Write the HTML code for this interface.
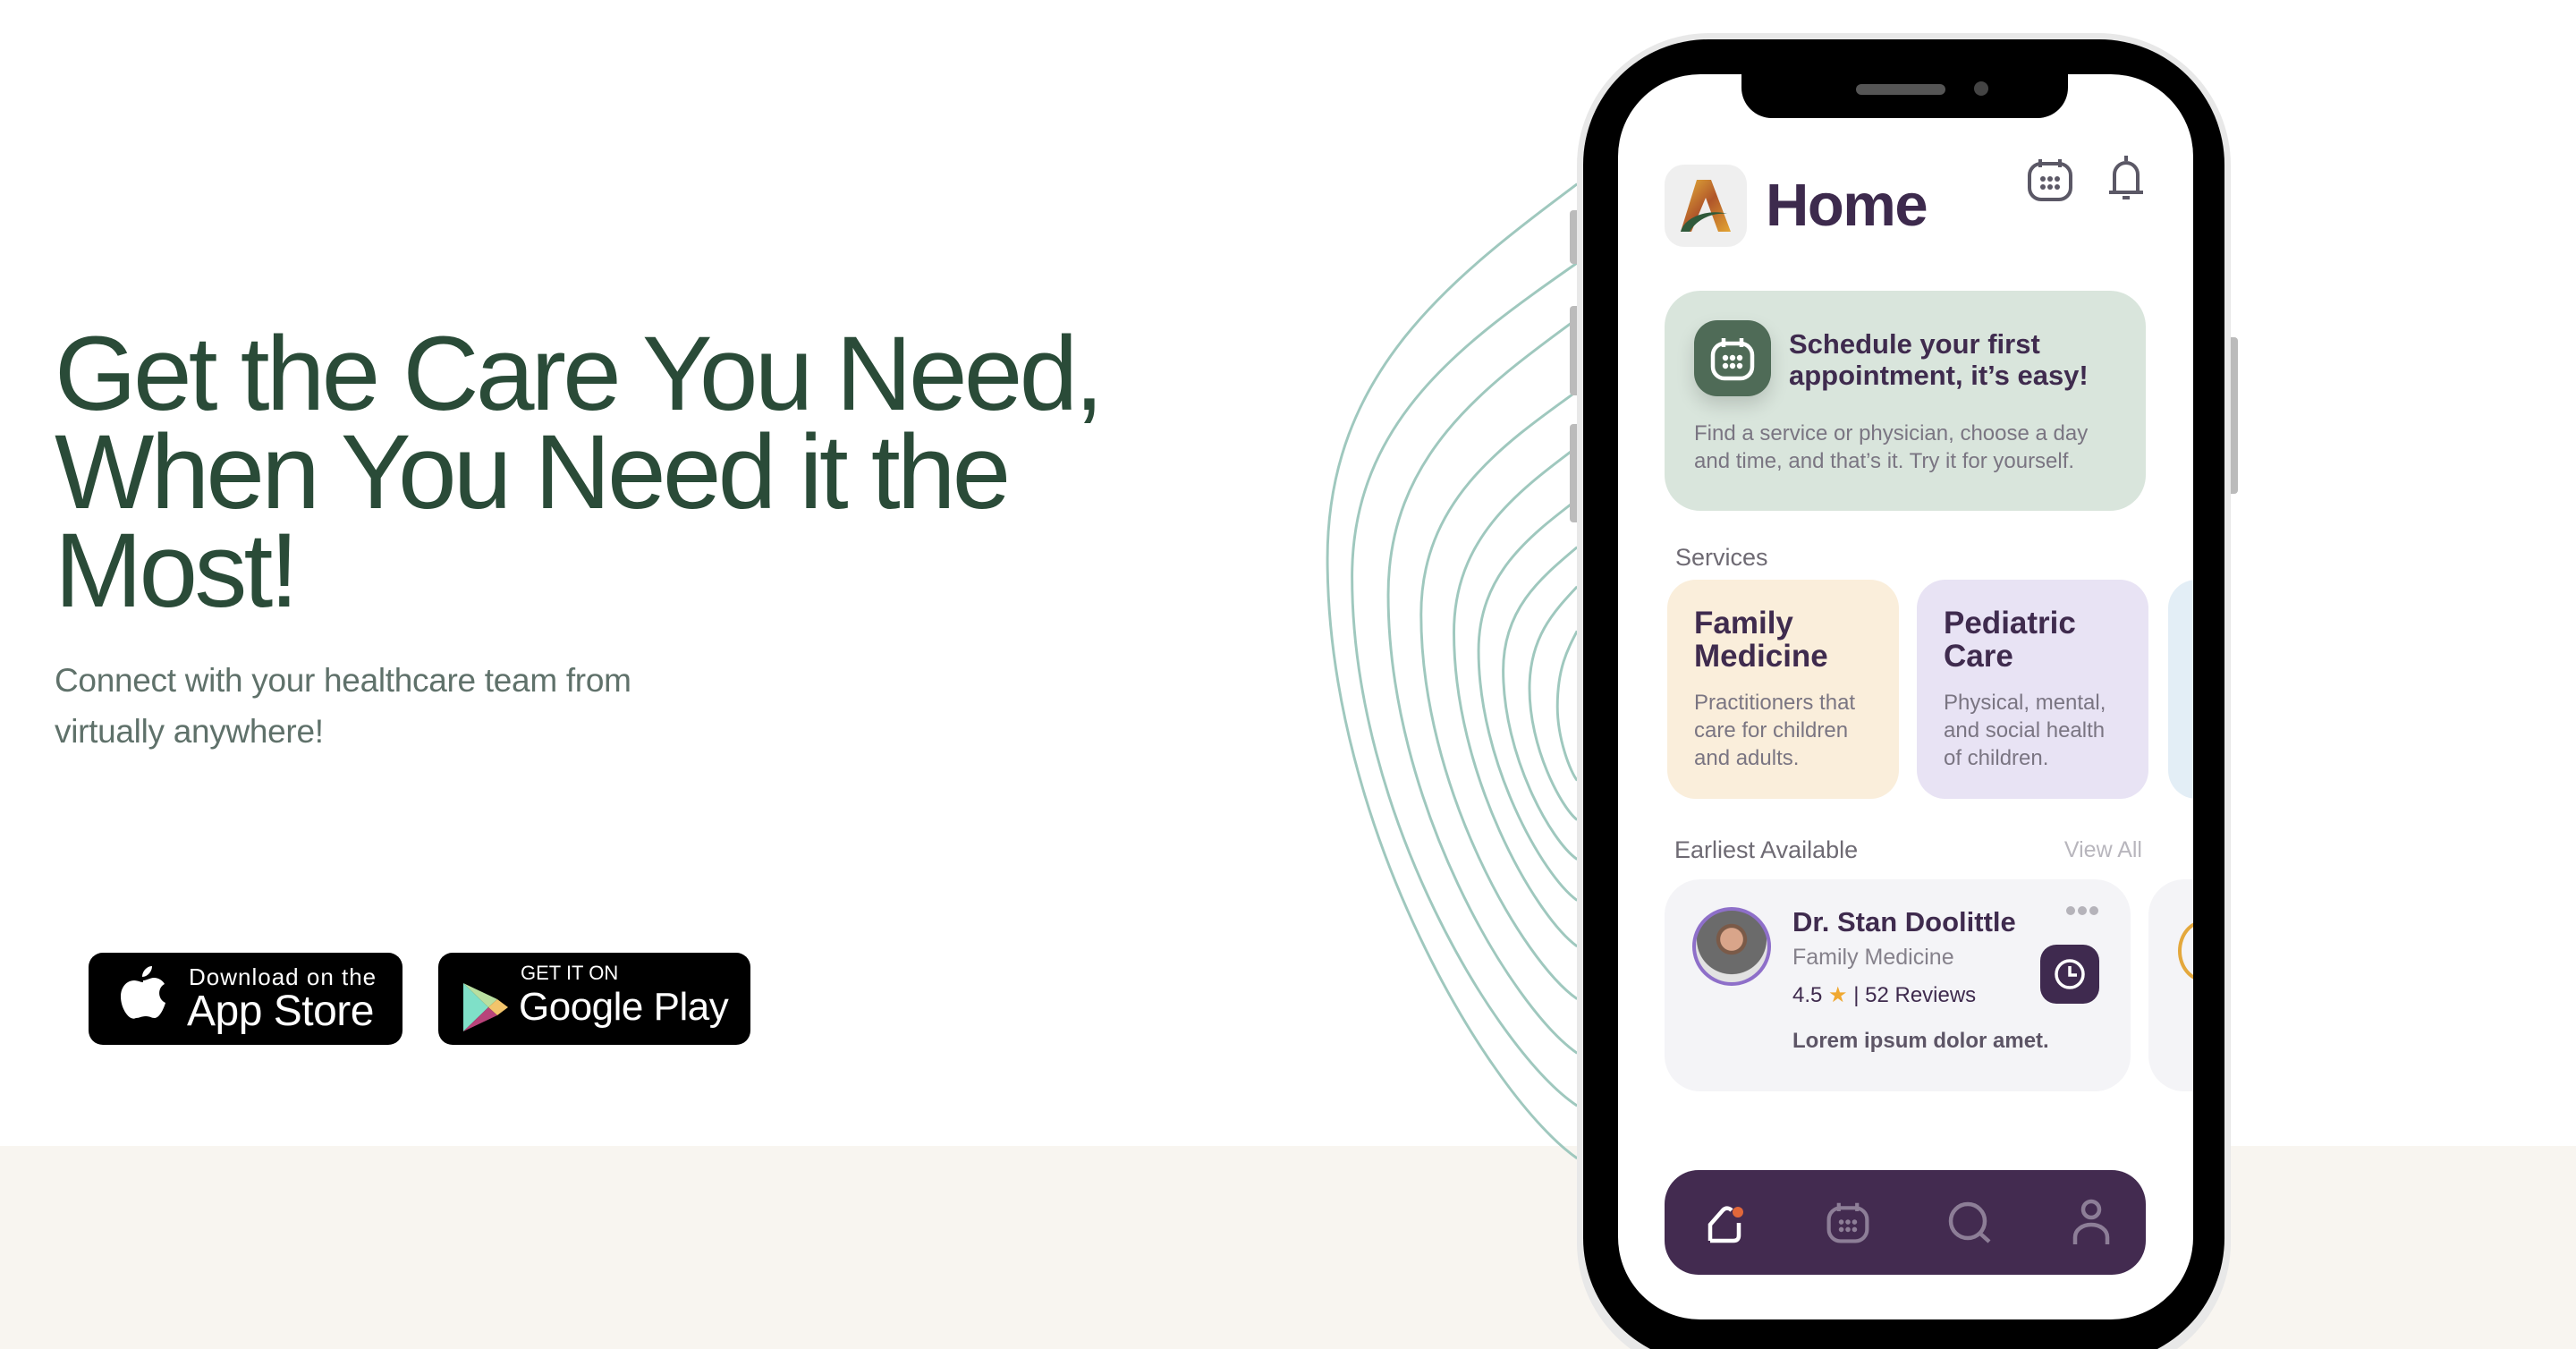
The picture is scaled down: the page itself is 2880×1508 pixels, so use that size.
<!DOCTYPE html>
<html><head><meta charset="utf-8"><style>
*{margin:0;padding:0;box-sizing:border-box}
html{width:2880px;height:1508px;overflow:hidden}
body{width:2880px;height:1508px;overflow:hidden;background:#fff;font-family:"Liberation Sans",Arial,sans-serif;position:relative}
.a{position:absolute;white-space:nowrap;line-height:1}
.scr .t{color:#3f2b4e;font-weight:bold}
.g{color:#7a7582}
</style></head><body>
<div class="a" style="left:0;top:1281px;width:2880px;height:227px;background:#f8f5f0"></div>

<svg class="a" style="left:0;top:0" width="2880" height="1508" viewBox="0 0 1568 821.03" fill="none" stroke="#9fc8be">
<g stroke-width="1.6">
<path d="M960,112 C884,169 808,226 808,340 C808,504 907,668 960,705"/>
<path d="M960,160 C891.5,208 823,255.5 823,351 C823,496 912,641 960,673"/>
<path d="M960,194 C902.5,236 845,278 845,362 C845,488 920,613 960,641"/>
<path d="M960,238 C912.5,272 865,306 865,374 C865,479 927,585 960,608"/>
<path d="M960,272 C922.5,300 885,328.5 885,385 C885,471 934,557 960,576"/>
<path d="M960,304 C930,327 900,350 900,396 C900,464 939,533 960,548"/>
<path d="M960,333 C937.5,352 915,370.5 915,408 C915,460 944,512 960,523"/>
<path d="M960,357 C945.5,372.5 931,388 931,419 C931,455 950,491 960,499"/>
<path d="M960,384 C954,395.5 948,407 948,430 C948,450 956,470 960,475"/>
</g>
</svg>

<div class="a" style="left:61px;top:363px;font-size:118px;line-height:110px;color:#2a4b38;letter-spacing:-3.8px;white-space:normal;width:1300px">Get the Care You Need,<br>When You Need it the<br>Most!</div>
<div class="a" style="left:61px;top:732px;font-size:37px;line-height:57px;color:#5f716a;letter-spacing:-0.3px;white-space:normal;width:800px">Connect with your healthcare team from<br>virtually anywhere!</div>

<div class="a" style="left:99px;top:1065px;width:351px;height:103px;background:#000;border-radius:16px"></div>
<svg class="a" style="left:130px;top:1076px" width="60" height="74" viewBox="0 0 60 74"><path fill="#fff" d="M40 4c0 6-5 12-11 12 0-6 5-12 11-12zM30 20c4 0 8-3 12-3 5 0 10 3 12 7-8 4-8 17 1 21-2 7-7 17-12 17-4 0-5-2-10-2s-7 2-11 2C15 66 5 52 5 38 5 27 12 20 20 20c4 0 7 2 10 2z"/></svg>
<div class="a" style="left:211px;top:1079px;font-size:26px;color:#fff;letter-spacing:1px">Download on the</div>
<div class="a" style="left:209px;top:1107px;font-size:48px;color:#fff;letter-spacing:-0.5px">App Store</div>

<div class="a" style="left:490px;top:1065px;width:349px;height:103px;background:#000;border-radius:16px"></div>
<svg class="a" style="left:516px;top:1097px" width="54" height="58" viewBox="0 0 54 58"><polygon points="2,2 30,29 2,56" fill="#7fe0c8"/><polygon points="2,2 40,20 30,29" fill="#b9dfa0"/><polygon points="30,29 40,20 52,29 40,38" fill="#f2c46b"/><polygon points="2,56 30,29 40,38" fill="#b8437a"/></svg>
<div class="a" style="left:582px;top:1077px;font-size:22px;color:#fff">GET IT ON</div>
<div class="a" style="left:580px;top:1104px;font-size:44px;color:#fff;letter-spacing:-0.5px">Google Play</div>

<!-- phone -->
<div class="a" style="left:1755px;top:235px;width:12px;height:60px;background:#bbb;border-radius:4px"></div>
<div class="a" style="left:1755px;top:342px;width:12px;height:100px;background:#bbb;border-radius:4px"></div>
<div class="a" style="left:1755px;top:474px;width:12px;height:110px;background:#bbb;border-radius:4px"></div>
<div class="a" style="left:2490px;top:377px;width:12px;height:175px;background:#bbb;border-radius:4px"></div>
<div style="position:absolute;left:0;top:0;width:2880px;height:1508px;overflow:hidden">
<div class="a" style="left:1763px;top:37px;width:731px;height:1500px;background:#e8e8e8;border-radius:148px"></div>
<div class="a" style="left:1770px;top:44px;width:717px;height:1480px;background:#000;border-radius:140px"></div>
</div>
<div class="a scr" style="left:1809px;top:83px;width:643px;height:1392px;background:#fff;border-radius:92px;overflow:hidden">
 <div class="a" style="left:138px;top:0;width:365px;height:49px;background:#000;border-radius:0 0 34px 34px"></div>
 <div class="a" style="left:266px;top:11px;width:100px;height:12px;background:#555;border-radius:6px"></div>
 <div class="a" style="left:398px;top:8px;width:16px;height:16px;background:#444;border-radius:50%"></div>

 <div class="a" style="left:52px;top:101px;width:92px;height:92px;background:#efefef;border-radius:22px"></div>
 <svg class="a" style="left:60px;top:110px" width="76" height="76" viewBox="0 0 76 76">
  <defs><linearGradient id="ag" x1="0" y1="0" x2="1" y2="1"><stop offset="0" stop-color="#e8b43a"/><stop offset=".5" stop-color="#b0562a"/><stop offset="1" stop-color="#e3a532"/></linearGradient></defs>
  <polygon points="28,8 44,8 66,66 52,66 38,28 22,66 10,66" fill="url(#ag)"/>
  <path d="M10 66 C14 50 40 40 62 46 C46 44 28 52 20 66 Z" fill="#2f5a3b"/>
 </svg>
 <div class="a t" style="left:165px;top:113px;font-size:67px;color:#3d2a4d;letter-spacing:-1.5px">Home</div>
 <svg class="a" style="left:455px;top:90px" width="56" height="56" viewBox="0 0 56 56" fill="none" stroke="#5b5866" stroke-width="4"><rect x="5" y="10" width="46" height="40" rx="13"/><path d="M17 5v9M39 5v9"/><g fill="#5b5866" stroke="none"><circle cx="20" cy="27" r="3"/><circle cx="28" cy="27" r="3"/><circle cx="36" cy="27" r="3"/><circle cx="20" cy="36" r="3"/><circle cx="28" cy="36" r="3"/><circle cx="36" cy="36" r="3"/></g></svg>
 <svg class="a" style="left:545px;top:88px" width="46" height="56" viewBox="0 0 46 56" fill="none" stroke="#5b5866" stroke-width="4"><path d="M23 3v6M10 42V24a13 13 0 0 1 26 0v18M4 44h38M19 50h8"/></svg>

 <div class="a" style="left:52px;top:242px;width:538px;height:246px;background:#d9e5dc;border-radius:40px"></div>
 <div class="a" style="left:85px;top:275px;width:86px;height:85px;background:#4f6b57;border-radius:26px;box-shadow:0 10px 20px rgba(0,0,0,.15)"></div>
 <svg class="a" style="left:100px;top:290px" width="56" height="56" viewBox="0 0 56 56" fill="none" stroke="#fff" stroke-width="4.5"><rect x="6" y="11" width="44" height="39" rx="13"/><path d="M18 5v10M38 5v10"/><g fill="#fff" stroke="none"><circle cx="20" cy="27" r="3.2"/><circle cx="28" cy="27" r="3.2"/><circle cx="36" cy="27" r="3.2"/><circle cx="20" cy="36" r="3.2"/><circle cx="28" cy="36" r="3.2"/><circle cx="36" cy="36" r="3.2"/></g></svg>
 <div class="a t" style="left:191px;top:284px;font-size:31px;line-height:35px">Schedule your first<br>appointment, it’s easy!</div>
 <div class="a g" style="left:85px;top:386px;font-size:24px;line-height:31px">Find a service or physician, choose a day<br>and time, and that’s it. Try it for yourself.</div>

 <div class="a" style="left:64px;top:527px;font-size:27px;color:#6e6a73">Services</div>
 <div class="a" style="left:55px;top:565px;width:259px;height:245px;background:#faeedb;border-radius:32px"></div>
 <div class="a t" style="left:85px;top:595px;font-size:35px;line-height:37px">Family<br>Medicine</div>
 <div class="a g" style="left:85px;top:687px;font-size:24px;line-height:31px">Practitioners that<br>care for children<br>and adults.</div>
 <div class="a" style="left:334px;top:565px;width:259px;height:245px;background:#e8e3f4;border-radius:32px"></div>
 <div class="a t" style="left:364px;top:595px;font-size:35px;line-height:37px">Pediatric<br>Care</div>
 <div class="a g" style="left:364px;top:687px;font-size:24px;line-height:31px">Physical, mental,<br>and social health<br>of children.</div>
 <div class="a" style="left:615px;top:565px;width:100px;height:245px;background:#e3eef6;border-radius:32px"></div>

 <div class="a" style="left:63px;top:854px;font-size:27px;color:#6e6a73">Earliest Available</div>
 <div class="a" style="left:486px;top:855px;width:100px;text-align:right;font-size:25px;color:#b8b6bd">View All</div>

 <div class="a" style="left:52px;top:900px;width:521px;height:237px;background:#f4f4f7;border-radius:40px"></div>
 <div class="a" style="left:593px;top:900px;width:100px;height:237px;background:#f4f4f7;border-radius:40px"></div>
 <div class="a" style="left:626px;top:945px;width:60px;height:70px;border:4px solid #e4a83c;border-radius:50%"></div>
 <div class="a" style="left:83px;top:931px;width:88px;height:88px;border:4px solid #8e6fc9;border-radius:50%;background:radial-gradient(circle at 50% 40%,#d9a58a 0 20%,#7a5a48 21% 27%,#6b6b6b 28% 62%,#e2e2e2 63%)"></div>
 <div class="a t" style="left:195px;top:932px;font-size:31px">Dr. Stan Doolittle</div>
 <div class="a" style="left:195px;top:975px;font-size:25px;color:#85818b">Family Medicine</div>
 <div class="a" style="left:195px;top:1018px;font-size:24px;color:#3f2b4e">4.5 <span style="color:#f0a830">★</span> | 52 Reviews</div>
 <div class="a" style="left:195px;top:1069px;font-size:24px;color:#5d5566;font-weight:bold">Lorem ipsum dolor amet.</div>
 <svg class="a" style="left:500px;top:928px" width="40" height="14"><g fill="#b5b3ba"><circle cx="6" cy="7" r="5"/><circle cx="19" cy="7" r="5"/><circle cx="32" cy="7" r="5"/></g></svg>
 <div class="a" style="left:472px;top:973px;width:66px;height:66px;background:#3f2a4f;border-radius:18px"></div>
 <svg class="a" style="left:485px;top:986px" width="40" height="40" viewBox="0 0 40 40" fill="none" stroke="#fff" stroke-width="3.5"><circle cx="20" cy="20" r="15"/><path d="M20 11v10h8"/></svg>

 <div class="a" style="left:52px;top:1225px;width:538px;height:117px;background:#432b50;border-radius:38px"></div>
 <svg class="a" style="left:95px;top:1260px" width="50" height="50" viewBox="0 0 50 50" fill="none" stroke="#fff" stroke-width="4.5"><path d="M8 44V26L22 10C26 6 30 8 32 10M8 44h26c4 0 6-2 6-6V24"/><circle cx="39" cy="12" r="6" fill="#e0673a" stroke="none"/></svg>
 <svg class="a" style="left:231px;top:1258px" width="52" height="52" viewBox="0 0 56 56" fill="none" stroke="#8d7e97" stroke-width="4.5"><rect x="5" y="10" width="46" height="40" rx="14"/><path d="M17 4v10M39 4v10"/><g fill="#8d7e97" stroke="none"><circle cx="20" cy="27" r="3"/><circle cx="28" cy="27" r="3"/><circle cx="36" cy="27" r="3"/><circle cx="20" cy="36" r="3"/><circle cx="28" cy="36" r="3"/><circle cx="36" cy="36" r="3"/></g></svg>
 <svg class="a" style="left:367px;top:1258px" width="54" height="54" viewBox="0 0 54 54" fill="none" stroke="#8d7e97" stroke-width="4.5"><circle cx="24" cy="24" r="19"/><path d="M38 38l10 9"/></svg>
 <svg class="a" style="left:506px;top:1256px" width="46" height="56" viewBox="0 0 46 56" fill="none" stroke="#8d7e97" stroke-width="4.5"><circle cx="23" cy="13" r="9"/><path d="M5 52V44c0-8 8-14 18-14s18 6 18 14v8"/></svg>
</div>
</body></html>
